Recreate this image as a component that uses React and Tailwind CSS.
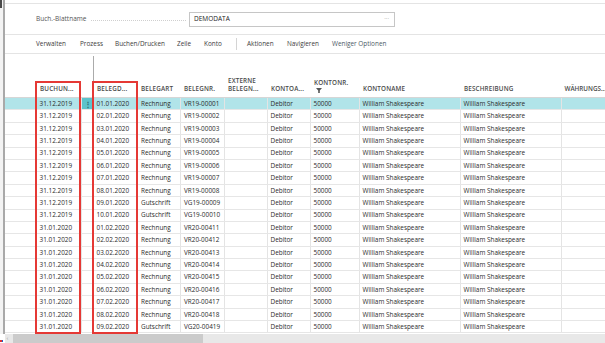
import React from "react";

const rows = [
  ["31.12.2019", "01.01.2020", "Rechnung", "VR19-00001"],
  ["31.12.2019", "02.01.2020", "Rechnung", "VR19-00002"],
  ["31.12.2019", "03.01.2020", "Rechnung", "VR19-00003"],
  ["31.12.2019", "04.01.2020", "Rechnung", "VR19-00004"],
  ["31.12.2019", "05.01.2020", "Rechnung", "VR19-00005"],
  ["31.12.2019", "06.01.2020", "Rechnung", "VR19-00006"],
  ["31.12.2019", "07.01.2020", "Rechnung", "VR19-00007"],
  ["31.12.2019", "08.01.2020", "Rechnung", "VR19-00008"],
  ["31.12.2019", "09.01.2020", "Gutschrift", "VG19-00009"],
  ["31.12.2019", "10.01.2020", "Gutschrift", "VG19-00010"],
  ["31.01.2020", "01.02.2020", "Rechnung", "VR20-00411"],
  ["31.01.2020", "02.02.2020", "Rechnung", "VR20-00412"],
  ["31.01.2020", "03.02.2020", "Rechnung", "VR20-00413"],
  ["31.01.2020", "04.02.2020", "Rechnung", "VR20-00414"],
  ["31.01.2020", "05.02.2020", "Rechnung", "VR20-00415"],
  ["31.01.2020", "06.02.2020", "Rechnung", "VR20-00416"],
  ["31.01.2020", "07.02.2020", "Rechnung", "VR20-00417"],
  ["31.01.2020", "08.02.2020", "Rechnung", "VR20-00418"],
  ["31.01.2020", "09.02.2020", "Gutschrift", "VG20-00419"],
];

function Filter() {
  return (
    <svg width="6" height="5" viewBox="0 0 6 5" className="mt-[1px] ml-[2px]">
      <path d="M0 0 H6 L3.8 2.5 V5 H2.2 V2.5 Z" fill="#555" />
    </svg>
  );
}

const hd = "text-[6.3px] font-semibold tracking-[0.15px] text-[#4a4a4a] leading-[8px] whitespace-nowrap";

function HeaderRow() {
  return (
    <div className="flex h-[42px] border-b border-[#d6d6d6]">
      <div className="w-[30.5px] shrink-0" />
      <div className="w-[47px] shrink-0 flex flex-col justify-end pb-[4px] pl-[5px]"><span className={hd}>BUCHUN...</span></div>
      <div className="w-[11px] shrink-0" />
      <div className="w-[44px] shrink-0 flex flex-col justify-end pb-[4px] pl-[3px] border-l-[1.5px] border-[#ababab]"><span className={hd}>BELEGD...</span></div>
      <div className="w-[44px] shrink-0 flex flex-col justify-end pb-[4px] pl-[4px]"><span className={hd}>BELEGART</span></div>
      <div className="w-[44px] shrink-0 flex flex-col justify-end pb-[4px] pl-[3px]"><span className={hd}>BELEGNR.</span></div>
      <div className="w-[43px] shrink-0 flex flex-col justify-end pb-[4px] pl-[3px]"><span className={hd}>EXTERNE</span><span className={hd}>BELEGN...</span></div>
      <div className="w-[43px] shrink-0 flex flex-col justify-end pb-[4px] pl-[3px]"><span className={hd}>KONTOA...</span></div>
      <div className="w-[49px] shrink-0 flex flex-col justify-end pb-[4px] pl-[3px]"><span className={hd}>KONTONR.</span><Filter /></div>
      <div className="w-[101px] shrink-0 flex flex-col justify-end pb-[4px] pl-[3px]"><span className={hd}>KONTONAME</span></div>
      <div className="w-[101px] shrink-0 flex flex-col justify-end pb-[4px] pl-[3px]"><span className={hd}>BESCHREIBUNG</span></div>
      <div className="flex-1 min-w-0 flex flex-col justify-end pb-[4px] pl-[2.5px]"><span className={hd + " tracking-[0px]"}>WÄHRUNGS...</span></div>
    </div>
  );
}

const cell = "shrink-0 h-full flex items-center border-r border-[#e4e4e4] whitespace-nowrap overflow-hidden";

function DataRow({ r, sel }) {
  return (
    <div className={"flex h-[12.4px] border-b border-[#e6e6e6] text-[6.4px] text-[#2b2b2b] " + (sel ? "bg-[#b1e4e9]" : "bg-white")}>
      <div className="w-[30.5px] shrink-0 h-full" />
      <div className={cell + " w-[47px] pl-[4.5px]"}>{r[0]}</div>
      <div className={"w-[11px] shrink-0 h-full flex items-center justify-center " + (sel ? "bg-[#5cc3cb]" : "")}>
        {sel ? <span className="text-[#2e6f74] text-[8px] font-bold leading-none">⋮</span> : null}
      </div>
      <div className={cell + " w-[44px] pl-[2.5px] border-l-[1.5px] border-l-[#ababab]"}>{r[1]}</div>
      <div className={cell + " w-[44px] pl-[4px]"}>{r[2]}</div>
      <div className={cell + " w-[44px] pl-[3px]"}>{r[3]}</div>
      <div className={cell + " w-[43px] pl-[3px]"}></div>
      <div className={cell + " w-[43px] pl-[2.5px]"}>Debitor</div>
      <div className={cell + " w-[49px] pl-[2.5px]"}>50000</div>
      <div className={cell + " w-[101px] pl-[2.5px]"}>William Shakespeare</div>
      <div className={cell + " w-[101px] pl-[2.5px]"}>William Shakespeare</div>
      <div className="flex-1 h-full" />
    </div>
  );
}

export default function App() {
  return (
    <div className="relative w-[605px] h-[343px] overflow-hidden bg-white flex flex-col" style={{ fontFamily: '"Open Sans", "Noto Sans", sans-serif' }}>
      <div className="flex h-[333.6px]">
        <div className="w-[3px] shrink-0 bg-[#f3f3f3] flex flex-col">
          <div className="h-[8px] w-[2px] bg-[#4a4a4a]" />
        </div>
        <div className="w-[1.5px] shrink-0 bg-[#a9a9a9]" />
        <div className="flex-1 min-w-0 flex flex-col">
          <div className="h-[3px]" />
          <div className="h-[32px] border-t border-b border-[#e4e4e4] flex items-center pl-[31.5px]">
            <span className="w-[55px] shrink-0 text-[6.5px] text-[#555] whitespace-nowrap">Buch.-Blattname</span>
            <div className="w-[95px] shrink-0 mt-[3px] border-b border-dotted border-[#cfcfcf]" />
            <div className="ml-[3px] w-[206px] h-[15px] border border-[#c6c6c6] flex items-center justify-between pl-[4px] pr-[5px]">
              <span className="text-[6.5px] text-[#222]">DEMODATA</span>
              <span className="text-[6px] text-[#888] leading-none -mt-[2px]">···</span>
            </div>
          </div>
          <div className="h-[19px] border-b border-[#e4e4e4] flex items-center pl-[31.5px] text-[6.4px] text-[#3c3c3c] whitespace-nowrap">
            <span className="w-[44px] shrink-0">Verwalten</span>
            <span className="w-[35px] shrink-0">Prozess</span>
            <span className="w-[62px] shrink-0">Buchen/Drucken</span>
            <span className="w-[27px] shrink-0">Zeile</span>
            <span className="w-[32px] shrink-0">Konto</span>
            <span className="w-[1px] h-[12px] bg-[#d4d4d4] shrink-0" />
            <span className="w-[10px] shrink-0" />
            <span className="w-[40px] shrink-0">Aktionen</span>
            <span className="w-[45px] shrink-0">Navigieren</span>
            <span className="shrink-0 text-[#4c5a66]">Weniger Optionen</span>
          </div>
          <div className="h-[2px]" />
          <HeaderRow />
          {rows.map((r, i) => (
            <DataRow key={i} r={r} sel={i === 0} />
          ))}
        </div>
      </div>
      <div className="flex flex-1">
        <div className="w-[4.5px] shrink-0 relative">
          <div className="absolute left-0 bottom-[1px] w-[1.5px] h-[2px] bg-[#e03030]" />
          <div className="absolute left-[1.5px] bottom-[1px] w-[1.5px] h-[2px] bg-[#2060d0]" />
        </div>
        <div className="flex-1 bg-[#e8e8e8] flex items-center">
          <span className="w-[8.5px] shrink-0 text-[6px] text-[#9a9a9a] leading-none pl-[2px]">‹</span>
          <div className="w-[190px] h-full bg-[#cbcbcb]" />
        </div>
      </div>
      <div className="absolute left-[35px] top-[81px] w-[46px] h-[253px] border-2 border-[#e53935] pointer-events-none" />
      <div className="absolute left-[92px] top-[81px] w-[46px] h-[253px] border-2 border-[#e53935] pointer-events-none" />
    </div>
  );
}
